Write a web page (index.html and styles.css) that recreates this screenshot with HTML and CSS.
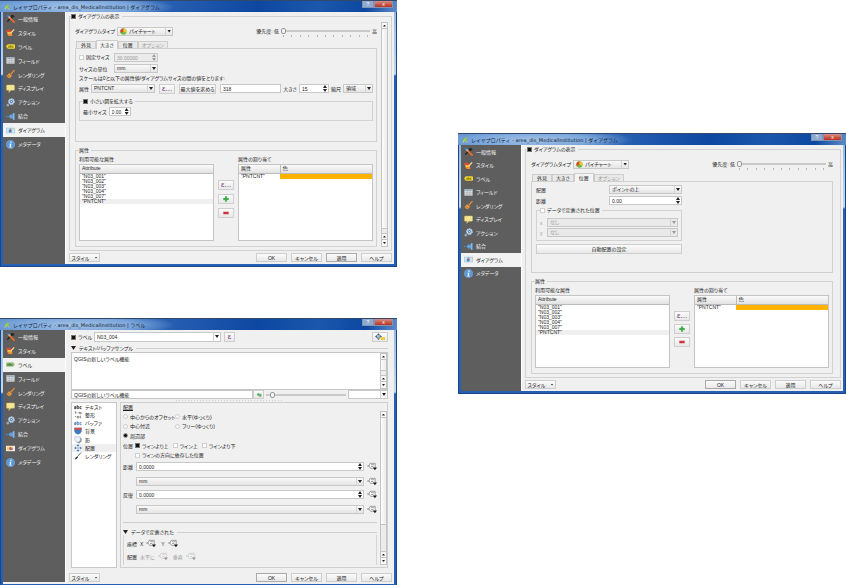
FILE: index.html
```html
<!DOCTYPE html>
<html lang="ja">
<head>
<meta charset="utf-8">
<title>レイヤプロパティ</title>
<link rel="stylesheet" href="styles.css">
</head>
<body>
<svg class="defs" aria-hidden="true">
  <symbol id="i-tools" viewBox="0 0 20 20"><path d="M3 17 13 6" stroke="#222" stroke-width="3"/><path d="M4 4 10 10" stroke="#e8e8e8" stroke-width="3"/><path d="M1 3 4 1 7 3 6 6 3 7Z" fill="#3b78b8"/><path d="M9 9 18 18" stroke="#f06a28" stroke-width="4" stroke-linecap="round"/><path d="M11 2 17 2 19 6 15 9 11 6Z" fill="#2b2b2b"/></symbol>
  <symbol id="i-style" viewBox="0 0 20 20"><path d="M1 5 11 8 8 17 4 15Z" fill="#f6c52e"/><path d="M1 4 9 4 12 9 3 10Z" fill="#e2482e"/><path d="M4 14 13 8 14 18 6 18Z" fill="#f58f2d"/><path d="M10 12 18 3" stroke="#ffd98c" stroke-width="3"/><path d="M5 10 10 12" stroke="#f7d774" stroke-width="2"/></symbol>
  <symbol id="i-tag" viewBox="0 0 20 20"><path d="M4 5H18Q20 5 20 7V13Q20 15 18 15H4L0 10Z" fill="#f3d92e"/><path d="M5 9H8V12H5V10M10 7V12H12V9H10M17 9H14V12H17" fill="none" stroke="#554a10" stroke-width="1"/></symbol>
  <symbol id="i-tag-green" viewBox="0 0 20 20"><path d="M2 5H16L20 10 16 15H2Q0 15 0 13V7Q0 5 2 5Z" fill="#a0c985"/><path d="M3 9H6V12H3V10M8 7V12H10V9H8M15 9H12V12H15" fill="none" stroke="#2e5630" stroke-width="1.2"/></symbol>
  <symbol id="i-table" viewBox="0 0 20 20"><path d="M1 3H19V17H1Z" fill="#e3e5e6"/><path d="M1 3H19V7H1Z" fill="#9db4c8"/><path d="M1 10.500H19M1 14H19M7 3V17M13 3V17" stroke="#8f9699" fill="none"/></symbol>
  <symbol id="i-broom" viewBox="0 0 20 20"><path d="M11 9 18 1" stroke="#d98b3c" stroke-width="3" stroke-linecap="round"/><path d="M7 6 14 12 9 18Q4 19 1 13Q5 11 7 6Z" fill="#e9a54b"/><path d="M7 7 13 13M3 13 7 17M5 11 10 16" stroke="#a4581c" stroke-width="1.500"/></symbol>
  <symbol id="i-bubble" viewBox="0 0 20 20"><path d="M3 2H17Q19 2 19 4V12Q19 14 17 14H11L6 19 7 14H3Q1 14 1 12V4Q1 2 3 2Z" fill="#f3e596" stroke="#c8b759"/></symbol>
  <symbol id="i-gear" viewBox="0 0 20 20"><circle cx="12" cy="8" r="6" fill="#5d8fca" stroke="#c9dcf0" stroke-width="3" stroke-dasharray="3 1.500"/><circle cx="12" cy="8" r="4.500" fill="#5280b5" stroke="#eef4fb" stroke-width="1.500"/><circle cx="12" cy="8" r="1.500" fill="#dbe8f5"/><circle cx="4" cy="16" r="2.500" fill="#87a9cb" stroke="#c9dcf0" stroke-dasharray="1.500 1"/></symbol>
  <symbol id="i-join" viewBox="0 0 20 20"><path d="M5 10 12 4V7Q15 6 16 2H19V18H16Q15 14 12 13V16Z" fill="#67a1dc"/><path d="M17 3V17" stroke="#8fbdea" stroke-width="2"/><circle cx="2" cy="10" r="1.800" fill="#4a8ed4"/></symbol>
  <symbol id="i-diagram" viewBox="0 0 20 14"><path d="M0 1H20V13H0Z" fill="#8fbbe3"/><path d="M1 2H7L9 6 6 12H1ZM12 2H19V12H13Z" fill="#d5e5ef"/><circle cx="9" cy="8" r="3" fill="#3f83c3"/><path d="M9 8V5A3 3 0 0 1 12 8Z" fill="#e54732"/><path d="M13 5 16 3" stroke="#f5c342" stroke-width="1.500"/></symbol>
  <symbol id="i-diagram-red" viewBox="0 0 20 14"><path d="M0 1H20V13H0Z" fill="#f1eee6"/><path d="M2 3H8V11H2Z" fill="#e9cf87"/><circle cx="11" cy="7" r="4" fill="#e04a32"/><path d="M11 7V3A4 4 0 0 1 15 7Z" fill="#f6c52e"/><path d="M11 7H15A4 4 0 0 1 11 11Z" fill="#4f8dcc"/></symbol>
  <symbol id="i-info" viewBox="0 0 20 20"><circle cx="10" cy="10" r="9.500" fill="#5c97d8" stroke="#88b4e3"/><circle cx="11" cy="5" r="1.700" fill="#fff"/><path d="M7.500 8.500H12L10.500 15H12.500V16.500H7.500L9 10H7.500Z" fill="#fff"/></symbol>
  <symbol id="i-qgis" viewBox="0 0 20 20"><path d="M4 18C1 9 6 2 16 1C19 10 14 15 8 15Z" fill="#7cc247"/><path d="M3 19Q7 9 13 5" stroke="#f5e9a0" stroke-width="2" fill="none"/><path d="M11 12 17 18" stroke="#e2d451" stroke-width="3"/></symbol>
  <symbol id="i-pie" viewBox="0 0 20 20"><circle cx="10" cy="10" r="9" fill="#67bc45"/><path d="M10 10V1A9 9 0 0 0 2 14Z" fill="#e3442d"/><path d="M10 10V1A9 9 0 0 1 18 14Z" fill="#f4c936"/></symbol>
  <symbol id="i-plus" viewBox="0 0 20 20"><path d="M7 1H13V7H19V13H13V19H7V13H1V7H7Z" fill="#39a846" stroke="#87cf8d"/></symbol>
  <symbol id="i-minus" viewBox="0 0 20 20"><path d="M1 6H19V14H1Z" fill="#cc2b36" stroke="#e99a9e"/></symbol>
  <symbol id="i-move" viewBox="0 0 20 20"><path d="M10 0 14 5H6ZM10 20 6 15H14ZM0 10 5 6V14ZM20 10 15 14V6Z" fill="#5688ba"/><circle cx="10" cy="10" r="3.500" fill="#d5e4f2" stroke="#5688ba"/></symbol>
  <symbol id="i-engine" viewBox="0 0 26 20"><path d="M9 0 13 5H5ZM9 18 5 13H13ZM0 9 5 5V13ZM18 9 13 13V5Z" fill="#45667d"/><circle cx="9" cy="9" r="4" fill="#a8bbc8" stroke="#45667d"/><path d="M13 10H26V18H16Z" fill="#f0cc3f"/></symbol>
  <symbol id="i-abc" viewBox="0 0 20 12"><path d="M1 5H5V10H1V7.500H5M8 1V10H12V5H8M19 5H15V10H19" fill="none" stroke="currentColor" stroke-width="1.800"/></symbol>
  <symbol id="i-format" viewBox="0 0 20 20"><path d="M2 3H6M4 1V7M9 4H12M14 2V7H18V4H14M2 14H5M8 12V17H12V14H8M18 13H15V17H18" fill="none" stroke="#555" stroke-width="1.500"/></symbol>
  <symbol id="i-shield" viewBox="0 0 20 20"><path d="M1 2H19V11Q17 17 10 19Q3 17 1 11Z" fill="#3e79bb"/><path d="M1 2H19V7H1Z" fill="#d94c43"/></symbol>
  <symbol id="i-shadow" viewBox="0 0 20 20"><path d="M5 5H19V13L13 19 5 15Z" fill="#8b929c"/><path d="M2 2H16V10Q15 15 9 16Q3 15 2 10Z" fill="#eef3fa" stroke="#7e95b3"/></symbol>
  <symbol id="i-brush" viewBox="0 0 20 20"><path d="M8 12 18 1" stroke="#657582" stroke-width="2.500"/><path d="M2 19Q3 12 8 11L10 13Q8 18 2 19Z" fill="#333"/></symbol>
  <symbol id="i-define" viewBox="0 0 22 18"><path d="M7 2H18V13H8L4 8Z" fill="#f8f8f8" stroke="currentColor" stroke-width="1.200" stroke-opacity=".7"/><path d="M0 8H5M9 5H16M9 9H14" stroke="currentColor" stroke-width="1.200" stroke-opacity=".7"/><path d="M13 11H22L17.500 17Z" fill="currentColor"/></symbol>
  <symbol id="i-undo" viewBox="0 0 20 20"><path d="M2 8 9 2V6H18V16H11V12H9V15Z" fill="#5fae6b"/></symbol>
</svg>

<main class="desktop">
<div class="column">

<section class="window">
  <header class="title"><svg><use href="#i-qgis"/></svg><h1>レイヤプロパティ - area_dis_MedicalInstitution | ダイアグラム</h1><div class="caption"><button type="button">?</button><button type="button" class="close">x</button></div></header>
  <div class="body">
    <nav class="side">
      <button type="button"><svg><use href="#i-tools"/></svg>一般情報</button>
      <button type="button"><svg><use href="#i-style"/></svg>スタイル</button>
      <button type="button"><svg><use href="#i-tag"/></svg>ラベル</button>
      <button type="button"><svg><use href="#i-table"/></svg>フィールド</button>
      <button type="button"><svg><use href="#i-broom"/></svg>レンダリング</button>
      <button type="button"><svg><use href="#i-bubble"/></svg>ディスプレイ</button>
      <button type="button"><svg><use href="#i-gear"/></svg>アクション</button>
      <button type="button"><svg><use href="#i-join"/></svg>結合</button>
      <button type="button" class="active"><svg><use href="#i-diagram"/></svg>ダイアグラム</button>
      <button type="button"><svg><use href="#i-info"/></svg>メタデータ</button>
    </nav>
    <div class="content">
      <fieldset class="group page">
        <legend><label><input type="checkbox" checked>ダイアグラムの表示</label></legend>
        <div class="scroll-area">
          <div class="stack">
            <div class="row head">
              <label for="a-type">ダイアグラムタイプ</label>
              <span class="combo type"><svg><use href="#i-pie"/></svg><select id="a-type"><option>パイチャート</option></select></span>
              <label for="a-pri" class="push">優先度: 低</label>
              <span class="slider ticks"><input id="a-pri" type="range" min="0" max="10" value="0"></span>
              <span class="high">高</span>
            </div>
            <div class="tabs"><button type="button">外見</button><button type="button" class="on">大きさ</button><button type="button">位置</button><button type="button" disabled>オプション</button></div>
            <div class="panel">
              <div class="row"><span class="field"><label><input type="checkbox">固定サイズ</label></span><span class="spin w44 off"><input type="text" value="30.00000" aria-label="固定サイズ" disabled></span></div>
              <div class="row"><label class="field" for="a-unit">サイズの単位</label><span class="combo w44"><select id="a-unit"><option>mm</option></select></span></div>
              <p class="note">スケールは0と以下の属性値/ダイアグラムサイズの間の値をとります:</p>
              <div class="row scale">
                <label for="a-attr">属性</label><span class="combo wide"><select id="a-attr"><option>PNTCNT</option></select></span>
                <button type="button" class="btn eps">ε...</button>
                <button type="button" class="btn find">最大値を求める</button>
                <input class="grow" type="text" value="318" aria-label="最大値">
                <label for="a-size">大きさ</label><span class="spin w30"><input id="a-size" type="text" value="15"></span>
                <label for="a-sc">縮尺</label><span class="combo w30"><select id="a-sc"><option>領域</option></select></span>
              </div>
              <fieldset class="group enlarge">
                <legend><label><input type="checkbox" checked>小さい図を拡大する</label></legend>
                <div class="row"><label for="a-min">最小サイズ</label><span class="spin w22"><input id="a-min" type="text" value="0.00"></span></div>
              </fieldset>
            </div>
            <fieldset class="group attrs">
              <legend>属性</legend>
              <div class="transfer">
                <span>利用可能な属性</span><span></span><span>属性の割り当て</span>
                <div class="tbl"><table><thead><tr><th>Attribute</th></tr></thead><tbody><tr><td>"N03_001"</td></tr><tr><td>"N03_002"</td></tr><tr><td>"N03_003"</td></tr><tr><td>"N03_004"</td></tr><tr><td>"N03_007"</td></tr><tr class="sel"><td>"PNTCNT"</td></tr></tbody></table></div>
                <div class="moves"><button type="button" class="btn eps">ε...</button><button type="button" class="btn" aria-label="追加"><svg><use href="#i-plus"/></svg></button><button type="button" class="btn" aria-label="削除"><svg><use href="#i-minus"/></svg></button></div>
                <div class="tbl"><table><thead><tr><th class="name">属性</th><th>色</th></tr></thead><tbody><tr><td>"PNTCNT"</td><td class="swatch"></td></tr></tbody></table></div>
              </div>
            </fieldset>
          </div>
          <div class="bar"><i class="up"></i><b></b><i class="up"></i><i class="down"></i></div>
        </div>
      </fieldset>
      <footer class="actions"><button type="button" class="btn menu">スタイル</button><button type="button" class="btn">OK</button><button type="button" class="btn">キャンセル</button><button type="button" class="btn default">適用</button><button type="button" class="btn">ヘルプ</button></footer>
    </div>
  </div>
</section>

<section class="window">
  <header class="title"><svg><use href="#i-qgis"/></svg><h1>レイヤプロパティ - area_dis_MedicalInstitution | ラベル</h1><div class="caption"><button type="button">?</button><button type="button" class="close">x</button></div></header>
  <div class="body">
    <nav class="side">
      <button type="button"><svg><use href="#i-tools"/></svg>一般情報</button>
      <button type="button"><svg><use href="#i-style"/></svg>スタイル</button>
      <button type="button" class="active"><svg><use href="#i-tag-green"/></svg>ラベル</button>
      <button type="button"><svg><use href="#i-table"/></svg>フィールド</button>
      <button type="button"><svg><use href="#i-broom"/></svg>レンダリング</button>
      <button type="button"><svg><use href="#i-bubble"/></svg>ディスプレイ</button>
      <button type="button"><svg><use href="#i-gear"/></svg>アクション</button>
      <button type="button"><svg><use href="#i-join"/></svg>結合</button>
      <button type="button"><svg><use href="#i-diagram-red"/></svg>ダイアグラム</button>
      <button type="button"><svg><use href="#i-info"/></svg>メタデータ</button>
    </nav>
    <div class="content">
      <div class="labels">
        <div class="row with">
          <label class="onoff"><input type="checkbox" checked>ラベル</label>
          <span class="combo edit"><select aria-label="ラベル"><option>N03_004</option></select></span>
          <button type="button" class="btn eps square">ε</button>
          <button type="button" class="btn engine" aria-label="自動配置の設定"><svg><use href="#i-engine"/></svg></button>
        </div>
        <div class="section"><i class="tri"></i>テキスト/バッファサンプル<hr></div>
        <div class="sample"><textarea aria-label="サンプル">QGISの新しいラベル機能</textarea><div class="bar short"><i class="up"></i><b></b><i class="up"></i><i class="down"></i></div></div>
        <div class="row preview">
          <input type="text" value="QGISの新しいラベル機能" aria-label="サンプルテキスト">
          <button type="button" class="btn undo" aria-label="リセット"><svg><use href="#i-undo"/></svg></button>
          <span class="slider"><input type="range" min="0" max="100" value="5" aria-label="サイズ"></span>
          <span class="combo edit bg"><select aria-label="背景色"><option></option></select></span>
        </div>
        <div class="grip"></div>
        <div class="split">
          <ul class="list">
            <li><svg><use href="#i-abc"/></svg>テキスト</li>
            <li><svg><use href="#i-format"/></svg>整形</li>
            <li class="blue"><svg><use href="#i-abc"/></svg>バッファ</li>
            <li><svg><use href="#i-shield"/></svg>背景</li>
            <li><svg><use href="#i-shadow"/></svg>影</li>
            <li class="sel"><svg><use href="#i-move"/></svg>配置</li>
            <li><svg><use href="#i-brush"/></svg>レンダリング</li>
          </ul>
          <div class="placement">
            <h2>配置</h2>
            <div class="scroll-area">
              <div class="stack">
                <div class="choices">
                  <div class="row"><label class="first"><input type="radio" name="p">中心からのオフセット</label><label><input type="radio" name="p">水平(ゆっくり)</label></div>
                  <div class="row"><label class="first"><input type="radio" name="p">中心付近</label><label><input type="radio" name="p">フリー(ゆっくり)</label></div>
                  <div class="row"><label><input type="radio" name="p" checked>周辺部</label></div>
                  <div class="row lines"><span class="key">位置</span><label><input type="checkbox" checked>ラインより上</label><label><input type="checkbox">ライン上</label><label><input type="checkbox">ラインより下</label></div>
                  <div class="row"><span class="key"></span><label><input type="checkbox">ラインの方向に依存した位置</label></div>
                </div>
                <div class="measure">
                  <label for="b-d">距離</label><span class="spin"><input id="b-d" type="text" value="0.0000"></span><svg><use href="#i-define"/></svg>
                  <span></span><span class="combo"><select aria-label="距離の単位"><option>mm</option></select></span><svg><use href="#i-define"/></svg>
                </div>
                <div class="measure">
                  <label for="b-r">反復</label><span class="spin"><input id="b-r" type="text" value="0.0000"></span><svg><use href="#i-define"/></svg>
                  <span></span><span class="combo"><select aria-label="反復の単位"><option>mm</option></select></span><svg><use href="#i-define"/></svg>
                </div>
                <hr class="rule">
                <div class="section"><i class="tri"></i>データで定義された<hr></div>
                <div class="defined">
                  <div class="row"><b>座標</b>X<svg><use href="#i-define"/></svg>Y<svg><use href="#i-define"/></svg></div>
                  <div class="row dim"><b>配置</b>水平に<svg><use href="#i-define"/></svg>垂直<svg><use href="#i-define"/></svg></div>
                </div>
              </div>
              <div class="bar mid"><i class="up"></i><b></b><i class="up"></i><i class="down"></i></div>
            </div>
          </div>
        </div>
      </div>
      <footer class="actions"><button type="button" class="btn menu">スタイル</button><button type="button" class="btn default">OK</button><button type="button" class="btn">キャンセル</button><button type="button" class="btn">適用</button><button type="button" class="btn">ヘルプ</button></footer>
    </div>
  </div>
</section>
</div>

<div class="column right">
<section class="window compact">
  <header class="title"><svg><use href="#i-qgis"/></svg><h1>レイヤプロパティ - area_dis_MedicalInstitution | ダイアグラム</h1><div class="caption"><button type="button">?</button><button type="button" class="close">x</button></div></header>
  <div class="body">
    <nav class="side">
      <button type="button"><svg><use href="#i-tools"/></svg>一般情報</button>
      <button type="button"><svg><use href="#i-style"/></svg>スタイル</button>
      <button type="button"><svg><use href="#i-tag"/></svg>ラベル</button>
      <button type="button"><svg><use href="#i-table"/></svg>フィールド</button>
      <button type="button"><svg><use href="#i-broom"/></svg>レンダリング</button>
      <button type="button"><svg><use href="#i-bubble"/></svg>ディスプレイ</button>
      <button type="button"><svg><use href="#i-gear"/></svg>アクション</button>
      <button type="button"><svg><use href="#i-join"/></svg>結合</button>
      <button type="button" class="active"><svg><use href="#i-diagram"/></svg>ダイアグラム</button>
      <button type="button"><svg><use href="#i-info"/></svg>メタデータ</button>
    </nav>
    <div class="content">
      <fieldset class="group page">
        <legend><label><input type="checkbox" checked>ダイアグラムの表示</label></legend>
        <div class="stack">
          <div class="row head">
            <label for="c-type">ダイアグラムタイプ</label>
            <span class="combo type"><svg><use href="#i-pie"/></svg><select id="c-type"><option>パイチャート</option></select></span>
            <label for="c-pri" class="push">優先度: 低</label>
            <span class="slider ticks"><input id="c-pri" type="range" min="0" max="10" value="0"></span>
            <span class="high">高</span>
          </div>
          <div class="tabs"><button type="button">外見</button><button type="button">大きさ</button><button type="button" class="on">位置</button><button type="button" disabled>オプション</button></div>
          <div class="panel">
            <div class="position">
              <div class="pair"><label for="c-p">配置</label><span class="combo"><select id="c-p"><option>ポイントの上</option></select></span></div>
              <div class="pair"><label for="c-d">距離</label><span class="spin"><input id="c-d" type="text" value="0.00"></span></div>
              <fieldset class="group custom">
                <legend><label><input type="checkbox">データで定義された位置</label></legend>
                <div class="row off"><label for="c-x">x</label><span class="combo"><select id="c-x" disabled><option>なし</option></select></span></div>
                <div class="row off"><label for="c-y">y</label><span class="combo"><select id="c-y" disabled><option>なし</option></select></span></div>
              </fieldset>
              <button type="button" class="btn auto">自動配置の設定</button>
            </div>
          </div>
          <fieldset class="group attrs">
            <legend>属性</legend>
            <div class="transfer">
              <span>利用可能な属性</span><span></span><span>属性の割り当て</span>
              <div class="tbl"><table><thead><tr><th>Attribute</th></tr></thead><tbody><tr><td>"N03_001"</td></tr><tr><td>"N03_002"</td></tr><tr><td>"N03_003"</td></tr><tr><td>"N03_004"</td></tr><tr><td>"N03_007"</td></tr><tr class="sel"><td>"PNTCNT"</td></tr></tbody></table></div>
              <div class="moves"><button type="button" class="btn eps">ε...</button><button type="button" class="btn" aria-label="追加"><svg><use href="#i-plus"/></svg></button><button type="button" class="btn" aria-label="削除"><svg><use href="#i-minus"/></svg></button></div>
              <div class="tbl"><table><thead><tr><th class="name">属性</th><th>色</th></tr></thead><tbody><tr><td>"PNTCNT"</td><td class="swatch"></td></tr></tbody></table></div>
            </div>
          </fieldset>
        </div>
      </fieldset>
      <footer class="actions"><button type="button" class="btn menu">スタイル</button><button type="button" class="btn default">OK</button><button type="button" class="btn">キャンセル</button><button type="button" class="btn">適用</button><button type="button" class="btn">ヘルプ</button></footer>
    </div>
  </div>
</section>
</div>
</main>
</body>
</html>
```
FILE: styles.css
```css
* { box-sizing: border-box; margin: 0; padding: 0; }
body {
  background: #fff;
  color: #1c1c1c;
  font: 5px/6px "Liberation Sans", "Noto Sans CJK JP", sans-serif;
  font-feature-settings: "palt";
}
button, input, select, textarea {
  appearance: none;
  border: 0;
  border-radius: 0;
  background: none;
  color: inherit;
  font: inherit;
  font-feature-settings: inherit;
  min-width: 0;
}
.defs { display: none; }
svg { display: block; flex: none; width: 9px; height: 9px; }

.desktop { display: grid; grid-template-columns: 397fr 388fr; column-gap: 61px; align-items: start; }
.column { display: flex; flex-direction: column; gap: 51px; min-width: 0; }
.column.right { padding-top: 133px; }

/* window frame */
.window {
  display: flex;
  flex-direction: column;
  padding: 0 3px 3px;
  background: linear-gradient(#8db3df 0, #c3d8ef 74px, #2460b4 76px, #2460b4 100%);
  box-shadow: inset 0 0 0 1px #1a4688;
}
.title {
  display: flex;
  align-items: center;
  gap: 3px;
  height: 12px;
  margin: 0 -3px;
  padding-left: 4px;
  background: radial-gradient(ellipse 100px 12px at 75px 6px, #a3c2e8 0, #7ba6db 60%, transparent 100%), linear-gradient(100deg, #5b8bcb 0, #1e57ac 50%, #0d47a1 65%, #1b58ac 80%, #0d47a1 92%, #5d8cc8 100%);
  border-top: 1px solid #33496b;
  white-space: nowrap;
}
.title svg { width: 6px; height: 6px; }
.title h1 { flex: 1; font: 400 5px/6px "DejaVu Sans", "Noto Sans CJK JP", sans-serif; font-feature-settings: normal; color: #101c30; }
.caption { display: flex; align-self: flex-start; margin-right: 4px; }
.caption button { width: 12px; height: 7px; border: 1px solid #8194b5; border-top: 0; background: #8fa9cf; color: #fff; line-height: 5px; }
.caption .close { width: 19px; background: linear-gradient(#d78f85, #b9301f); }
.body { display: flex; flex: 1; background: #f0f0f0; }
.side { display: grid; grid-auto-rows: 1fr; align-self: stretch; width: 62px; height: 139px; background: #5e5e5e; box-shadow: 0 113px 0 #5e5e5e; flex: none; }
.side button { display: flex; align-items: center; gap: 3px; padding-left: 3px; color: #f4f4f4; text-align: left; white-space: nowrap; }
.side .active { background: #f2f2f2; color: #1c1c1c; }
.content { display: flex; flex-direction: column; flex: 1; min-width: 0; padding: 1px 2px 0 3px; border-left: 1px solid #fff; }

/* shared controls */
.row { display: flex; align-items: center; gap: 2px; height: 9px; white-space: nowrap; }
label { white-space: nowrap; }
label:has(> input) { display: inline-flex; align-items: center; gap: 2px; }
.group { border: 1px solid #d2d2d2; min-width: 0; }
legend { padding-right: 2px; height: 6px; white-space: nowrap; }
legend label { height: 6px; }
input[type="checkbox"] { width: 5px; height: 5px; border: 1px solid #d0d0d0; background: #fff; flex: none; }
input[type="checkbox"]:checked { border: 1px solid #777; background: #111; }
input[type="radio"] { width: 5px; height: 5px; border: 1px solid #ccc; border-radius: 50%; background: #fafafa; flex: none; }
input[type="radio"]:checked { background: #111; border-color: #999; }
input[type="text"] { height: 9px; padding: 0 2px; border: 1px solid #c6c6c6; background: #fff; }
.btn { display: flex; align-items: center; justify-content: center; height: 10px; border: 1px solid #cecece; background: linear-gradient(#fbfbfb, #e8e8e8); white-space: nowrap; }
.btn svg { width: 6px; height: 6px; }
.btn.default { border-color: #aaa; }
.eps { width: 16px; color: #70387c; font-size: 8px; line-height: 6px; }
.combo, .spin { display: flex; align-items: center; position: relative; height: 9px; border: 1px solid #c8c8c8; background: linear-gradient(#f9f9f9, #e5e5e5); min-width: 0; }
.combo select { width: 100%; height: 7px; padding: 0 8px 0 2px; line-height: 7px; opacity: 1; }
.combo::before { content: ""; position: absolute; right: 6px; top: 0; bottom: 0; border-left: 1px solid #d4d4d4; }
.combo::after { content: ""; position: absolute; right: 1px; top: 2px; width: 4px; height: 3px; background: #222; clip-path: polygon(0 0, 100% 0, 50% 100%); pointer-events: none; }
.combo.edit { background: #fff; height: 10px; }
.spin { background: #fff; }
.spin input[type="text"] { width: 100%; height: 7px; border: 0; background: none; padding-right: 6px; }
.spin::before, .spin::after { content: ""; position: absolute; right: 1px; width: 4px; height: 3px; background: #222; }
.spin::before { top: 0; clip-path: polygon(50% 0, 100% 100%, 0 100%); }
.spin::after { bottom: 0; clip-path: polygon(0 0, 100% 0, 50% 100%); }
.off { color: #999; }
.spin.off { background: #ebebeb; }
.off .combo::after, .spin.off::before, .spin.off::after { background: #999; }
.w22 { width: 22px; }
.w30 { width: 30px; }
.w44 { width: 44px; }
.slider { position: relative; display: flex; }
.slider input { width: 100%; height: 7px; background: linear-gradient(#c9c9c9, #c9c9c9) center / 100% 2px no-repeat; }
.slider input::-webkit-slider-thumb { appearance: none; width: 5px; height: 6px; border: 1px solid #999; border-radius: 2px; background: #f3f3f3; }
.ticks::after { content: ""; position: absolute; left: 2px; right: 2px; top: 7px; height: 2px; background: repeating-linear-gradient(90deg, #b4b4b4 0 1px, transparent 1px calc(10% - 1px / 10)); }
.bar { display: flex; flex-direction: column; width: 7px; border: 1px solid #c4c4c4; background: #ececec; }
.bar i { height: 6px; background: #f8f8f8; border-bottom: 1px solid #c4c4c4; display: grid; place-items: center; }
.bar i::after { content: ""; width: 3px; height: 2px; background: #222; }
.bar .up::after { clip-path: polygon(50% 0, 100% 100%, 0 100%); }
.bar .down::after { clip-path: polygon(0 0, 100% 0, 50% 100%); }
.bar .down { border: 0; }
.bar b { flex: 1; margin-bottom: 4px; background: linear-gradient(90deg, #fdfdfd, #ebebeb); border-bottom: 1px solid #c4c4c4; }
.bar b + .up { border-top: 1px solid #c4c4c4; height: 7px; }
.bar.short b { flex: none; height: 11px; margin-bottom: auto; }
.bar.mid b { flex: none; height: 107px; margin-bottom: auto; }

/* diagram page */
.scroll-area { display: grid; grid-template-columns: 1fr 7px; gap: 4px; }
.stack { display: flex; flex-direction: column; min-width: 0; }
.page { padding: 3px 3px 3px 5px; }
.page > legend { margin-left: -4px; }
.compact .page { padding: 3px 7px 3px 5px; }
.head { height: 10px; margin: 4px 0 5px; }
.type { width: 56px; }
.type svg { width: 7px; height: 7px; margin-left: 2px; }
.push { margin-left: auto; }
.head .slider { width: 89px; }
.high { width: 5px; }
.tabs { display: flex; padding-left: 1px; height: 7px; align-items: flex-end; }
.tabs button { height: 7px; min-width: 20px; padding: 0 3px; border: 1px solid #cdcdcd; border-bottom: 0; background: #e9e9e9; }
.tabs .on { height: 9px; margin-bottom: -1px; background: #f4f4f4; z-index: 1; }
.tabs button:disabled { color: #999; }
.panel { display: flex; flex-direction: column; gap: 2px; min-height: 94px; padding: 4px 3px; border: 1px solid #d0d0d0; }
.compact .panel { min-height: 92px; padding: 3px 4px; }
.field { width: 33px; }
.note { line-height: 7px; white-space: nowrap; }
.wide { width: 64px; }
.scale .eps { margin: 0 2px; }
.find { width: 37px; margin-right: 2px; }
.grow { flex: 1; width: 40px; }
.enlarge { margin-top: 3px; padding: 3px 3px 4px; }
.attrs { margin-top: 5px; padding: 3px 3px 5px; }
.transfer { display: grid; grid-template-columns: 1fr 16px 1fr; column-gap: 4px; row-gap: 2px; }
.tbl { min-height: 77px; border: 1px solid #c4c4c4; background: #fff; min-width: 0; }
.compact .tbl { min-height: 73px; }
table { width: 100%; border-collapse: collapse; table-layout: fixed; line-height: 5px; }
th { height: 8px; padding-left: 2px; text-align: left; font-weight: 400; background: linear-gradient(#fafafa, #e2e2e2); border-bottom: 1px solid #bbb; }
th + th { border-left: 1px solid #bbb; }
.name { width: 31%; }
td { height: 5px; padding-left: 2px; }
.sel { background: #efefef; }
.swatch { background: #ffb300; }
.moves { display: flex; flex-direction: column; gap: 4px; padding-top: 16px; }
.compact .moves { gap: 3px; }
.actions { display: flex; gap: 4px; padding: 2px 0; }
.actions .btn { width: 31px; height: 9px; }
.actions .menu { margin-right: auto; gap: 5px; }
.menu::after { content: ""; width: 3px; height: 2px; background: #333; clip-path: polygon(0 0, 100% 0, 50% 100%); }

/* position page */
.compact .side { width: 60px; height: 135px; box-shadow: 0 111px 0 #5e5e5e; }
.position { display: flex; flex-direction: column; gap: 2px; width: 50%; }
.pair { display: grid; grid-template-columns: 1fr 1fr; align-items: center; }
.custom { padding: 5px 3px 3px; }
.custom .row + .row { margin-top: 1px; }
.custom .row label { width: 5px; }
.custom .combo { flex: 1; background: #e9e9e9; }
.custom select { color: #999; }
.auto { margin-top: 1px; }

/* label page */
.labels { padding: 1px 4px 3px 2px; display: flex; flex-direction: column; }
.with { height: 10px; gap: 3px; }
.onoff { width: 20px; }
.with .combo { width: 127px; }
.square { width: 11px; }
.engine { width: 16px; margin-left: auto; }
.engine svg { width: 10px; height: 8px; }
.section { display: flex; align-items: center; gap: 3px; height: 6px; white-space: nowrap; }
.labels > .section { margin: 3px 0 1px; }
.section hr { flex: 1; border: 0; border-top: 1px solid #cfcfcf; }
.tri { width: 5px; height: 4px; background: #222; clip-path: polygon(0 0, 100% 0, 50% 100%); }
.sample { display: flex; height: 38px; border: 1px solid #c6c6c6; background: #fff; }
.sample textarea { flex: 1; padding: 3px 2px; resize: none; overflow: hidden; }
.preview { gap: 0; }
.preview > input { width: 182px; }
.undo { width: 11px; height: 9px; }
.preview .slider { flex: 1; margin: 0 2px; }
.bg { width: 40px; }
.combo.bg { height: 9px; }
.grip { width: 108px; height: 1px; margin: 1px auto; background: repeating-linear-gradient(90deg, #cfcfcf 0 1px, transparent 1px 3px); }
.split { display: grid; grid-template-columns: 46px 1fr; gap: 3px; }
.list { display: grid; grid-template-rows: repeat(7, 1fr); height: 166px; padding-bottom: 107px; list-style: none; background: #fff; border: 1px solid #c8c8c8; }
.list li { display: flex; align-items: center; gap: 3px; padding-left: 2px; color: #222; white-space: nowrap; }
.list svg { width: 8px; height: 8px; }
.blue svg { color: #3c6cb0; }
.placement { border: 1px solid #cfcfcf; padding: 1px 0 1px 2px; min-width: 0; }
.placement h2 { font-size: 5px; line-height: 7px; font-weight: 400; text-decoration: underline; }
.placement .scroll-area { grid-template-columns: 1fr 7px; gap: 3px; }
.choices { display: grid; grid-auto-rows: 1fr; height: 48px; margin: 1px 0 2px; }
.choices .row { height: auto; }
.choices .first { width: 50px; }
.lines { gap: 4px; }
.key { width: 10px; }
.lines .key { width: 8px; }
.measure { display: grid; grid-template-columns: 10px 1fr 10px; column-gap: 3px; row-gap: 6px; align-items: center; margin-bottom: 4px; }
.measure svg { width: 10px; }
.rule { border: 0; border-top: 1px solid #cfcfcf; margin: 4px 0 6px; }
.defined { display: flex; flex-direction: column; gap: 4px; padding: 4px 3px; border: solid #d4d4d4; border-width: 0 1px; }
.defined .row { gap: 3px; }
.defined svg { width: 10px; margin-right: 2px; }
.defined b { font-weight: 400; }
.dim { color: #999; }
.dim b { color: #222; }
```
